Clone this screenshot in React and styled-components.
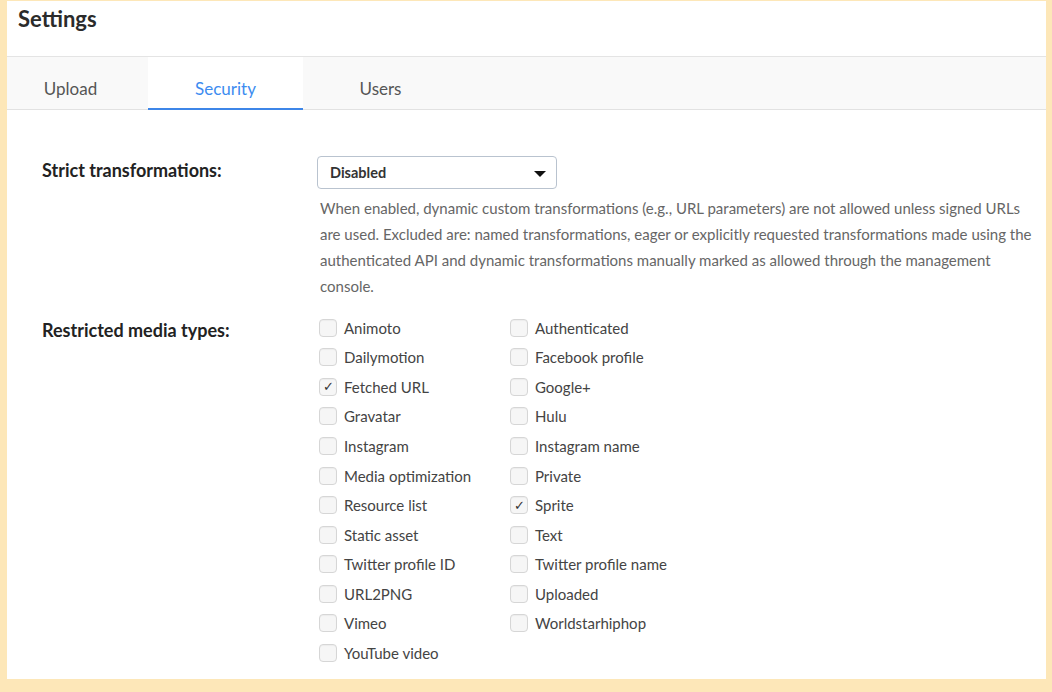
import React from 'react';
import styled, { createGlobalStyle } from 'styled-components';

const GlobalStyle = createGlobalStyle`
  html, body {
    margin: 0;
    padding: 0;
    background: #fde7b8;
  }
  body {
    font-family: Lato, "Open Sans", sans-serif;
    color: #333;
  }
`

const Page = styled.div`
  padding: 1px 6px 0 7px;
  height: 692px;
  box-sizing: border-box;
`

const Panel = styled.div`
  background: #fff;
  height: 678px;
  overflow: hidden;
`

const Header = styled.header`
  height: 56px;
  border-bottom: 1px solid #e4e4e4;
  padding: 5px 11px 0;
  box-sizing: border-box;
  h1 {
    margin: 0;
    font-size: 22px;
    line-height: 26px;
    font-weight: 700;
    color: #2b2b2b;
  }
`

const TabBar = styled.nav`
  display: flex;
  height: 53px;
  background: #f9f9f9;
  border-bottom: 1px solid #e2e2e2;
  box-sizing: border-box;
`

const Tab = styled.div`
  width: ${p => (p.$first ? '141px' : '155px')};
  padding-right: ${p => (p.$first ? '14px' : '0')};
  box-sizing: border-box;
  display: flex;
  align-items: center;
  justify-content: center;
  font-size: 17px;
  color: ${p => (p.$active ? '#3d8cf0' : '#555')};
  background: ${p => (p.$active ? '#fff' : 'transparent')};
  border-bottom: 2px solid ${p => (p.$active ? '#3d86e8' : 'transparent')};
  margin-bottom: -1px;
  padding-top: 11px;
`

const Content = styled.div`
  padding: 46px 14px 0 35px;
`

const Row = styled.div`
  display: grid;
  grid-template-columns: 275px 1fr;
  margin-bottom: ${p => p.$gap || 0}px;
`

const Label = styled.div`
  font-weight: 700;
  font-size: 18px;
  color: #222;
  line-height: 28px;
  padding-top: ${p => p.$top || 0}px;
`

const Select = styled.div`
  width: 240px;
  height: 33px;
  box-sizing: border-box;
  border: 1px solid #b9c3cf;
  border-radius: 4px;
  display: flex;
  align-items: center;
  justify-content: space-between;
  padding: 0 10px 0 12px;
  font-size: 14.5px;
  font-weight: 700;
  color: #333;
`

const Caret = styled.span`
  width: 0;
  height: 0;
  border-left: 6px solid transparent;
  border-right: 6px solid transparent;
  border-top: 6px solid #111;
  margin-top: 2px;
`

const Help = styled.p`
  margin: 6px 0 0 3px;
  font-size: 15px;
  line-height: 26px;
  color: #666;
  max-width: 715px;
`

const CheckGrid = styled.div`
  display: grid;
  grid-template-columns: 191px 1fr;
  grid-template-rows: repeat(12, 29.55px);
  grid-auto-flow: column;
  padding-left: 2px;
`

const Option = styled.label`
  display: flex;
  align-items: center;
  gap: 7px;
  font-size: 15px;
  color: #444;
`

const Box = styled.span`
  width: 16px;
  height: 16px;
  border: 1px solid #d6d6d6;
  border-radius: 4px;
  background: #f6f6f6;
  box-shadow: inset 0 1px 1px rgba(0, 0, 0, .04);
  display: flex;
  align-items: center;
  justify-content: center;
  font-size: 13px;
  color: #333;
  line-height: 1;
`

const col1 = ['Animoto', 'Dailymotion', 'Fetched URL', 'Gravatar', 'Instagram', 'Media optimization', 'Resource list', 'Static asset', 'Twitter profile ID', 'URL2PNG', 'Vimeo', 'YouTube video']
const col2 = ['Authenticated', 'Facebook profile', 'Google+', 'Hulu', 'Instagram name', 'Private', 'Sprite', 'Text', 'Twitter profile name', 'Uploaded', 'Worldstarhiphop']
const checked = ['Fetched URL', 'Sprite']

const App = () => {
  return (
    <Page>
      <GlobalStyle />
      <Panel>
        <Header>
          <h1>Settings</h1>
        </Header>
        <TabBar>
          <Tab $first>Upload</Tab>
          <Tab $active>Security</Tab>
          <Tab>Users</Tab>
        </TabBar>
        <Content>
          <Row $gap={14}>
            <Label $top={0}>Strict transformations:</Label>
            <div>
              <Select>
                Disabled
                <Caret />
              </Select>
              <Help>
                When enabled, dynamic custom transformations (e.g., URL parameters) are not allowed unless signed URLs are used. Excluded are: named transformations, eager or explicitly requested transformations made using the authenticated API and dynamic transformations manually marked as allowed through the management console.
              </Help>
            </div>
          </Row>
          <Row>
            <Label $top={3}>Restricted media types:</Label>
            <CheckGrid>
              {col1.concat(col2).map(name => (
                <Option key={name}>
                  <Box>{checked.includes(name) ? '✓' : ''}</Box>
                  {name}
                </Option>
              ))}
            </CheckGrid>
          </Row>
        </Content>
      </Panel>
    </Page>
  )
}

export default App;
